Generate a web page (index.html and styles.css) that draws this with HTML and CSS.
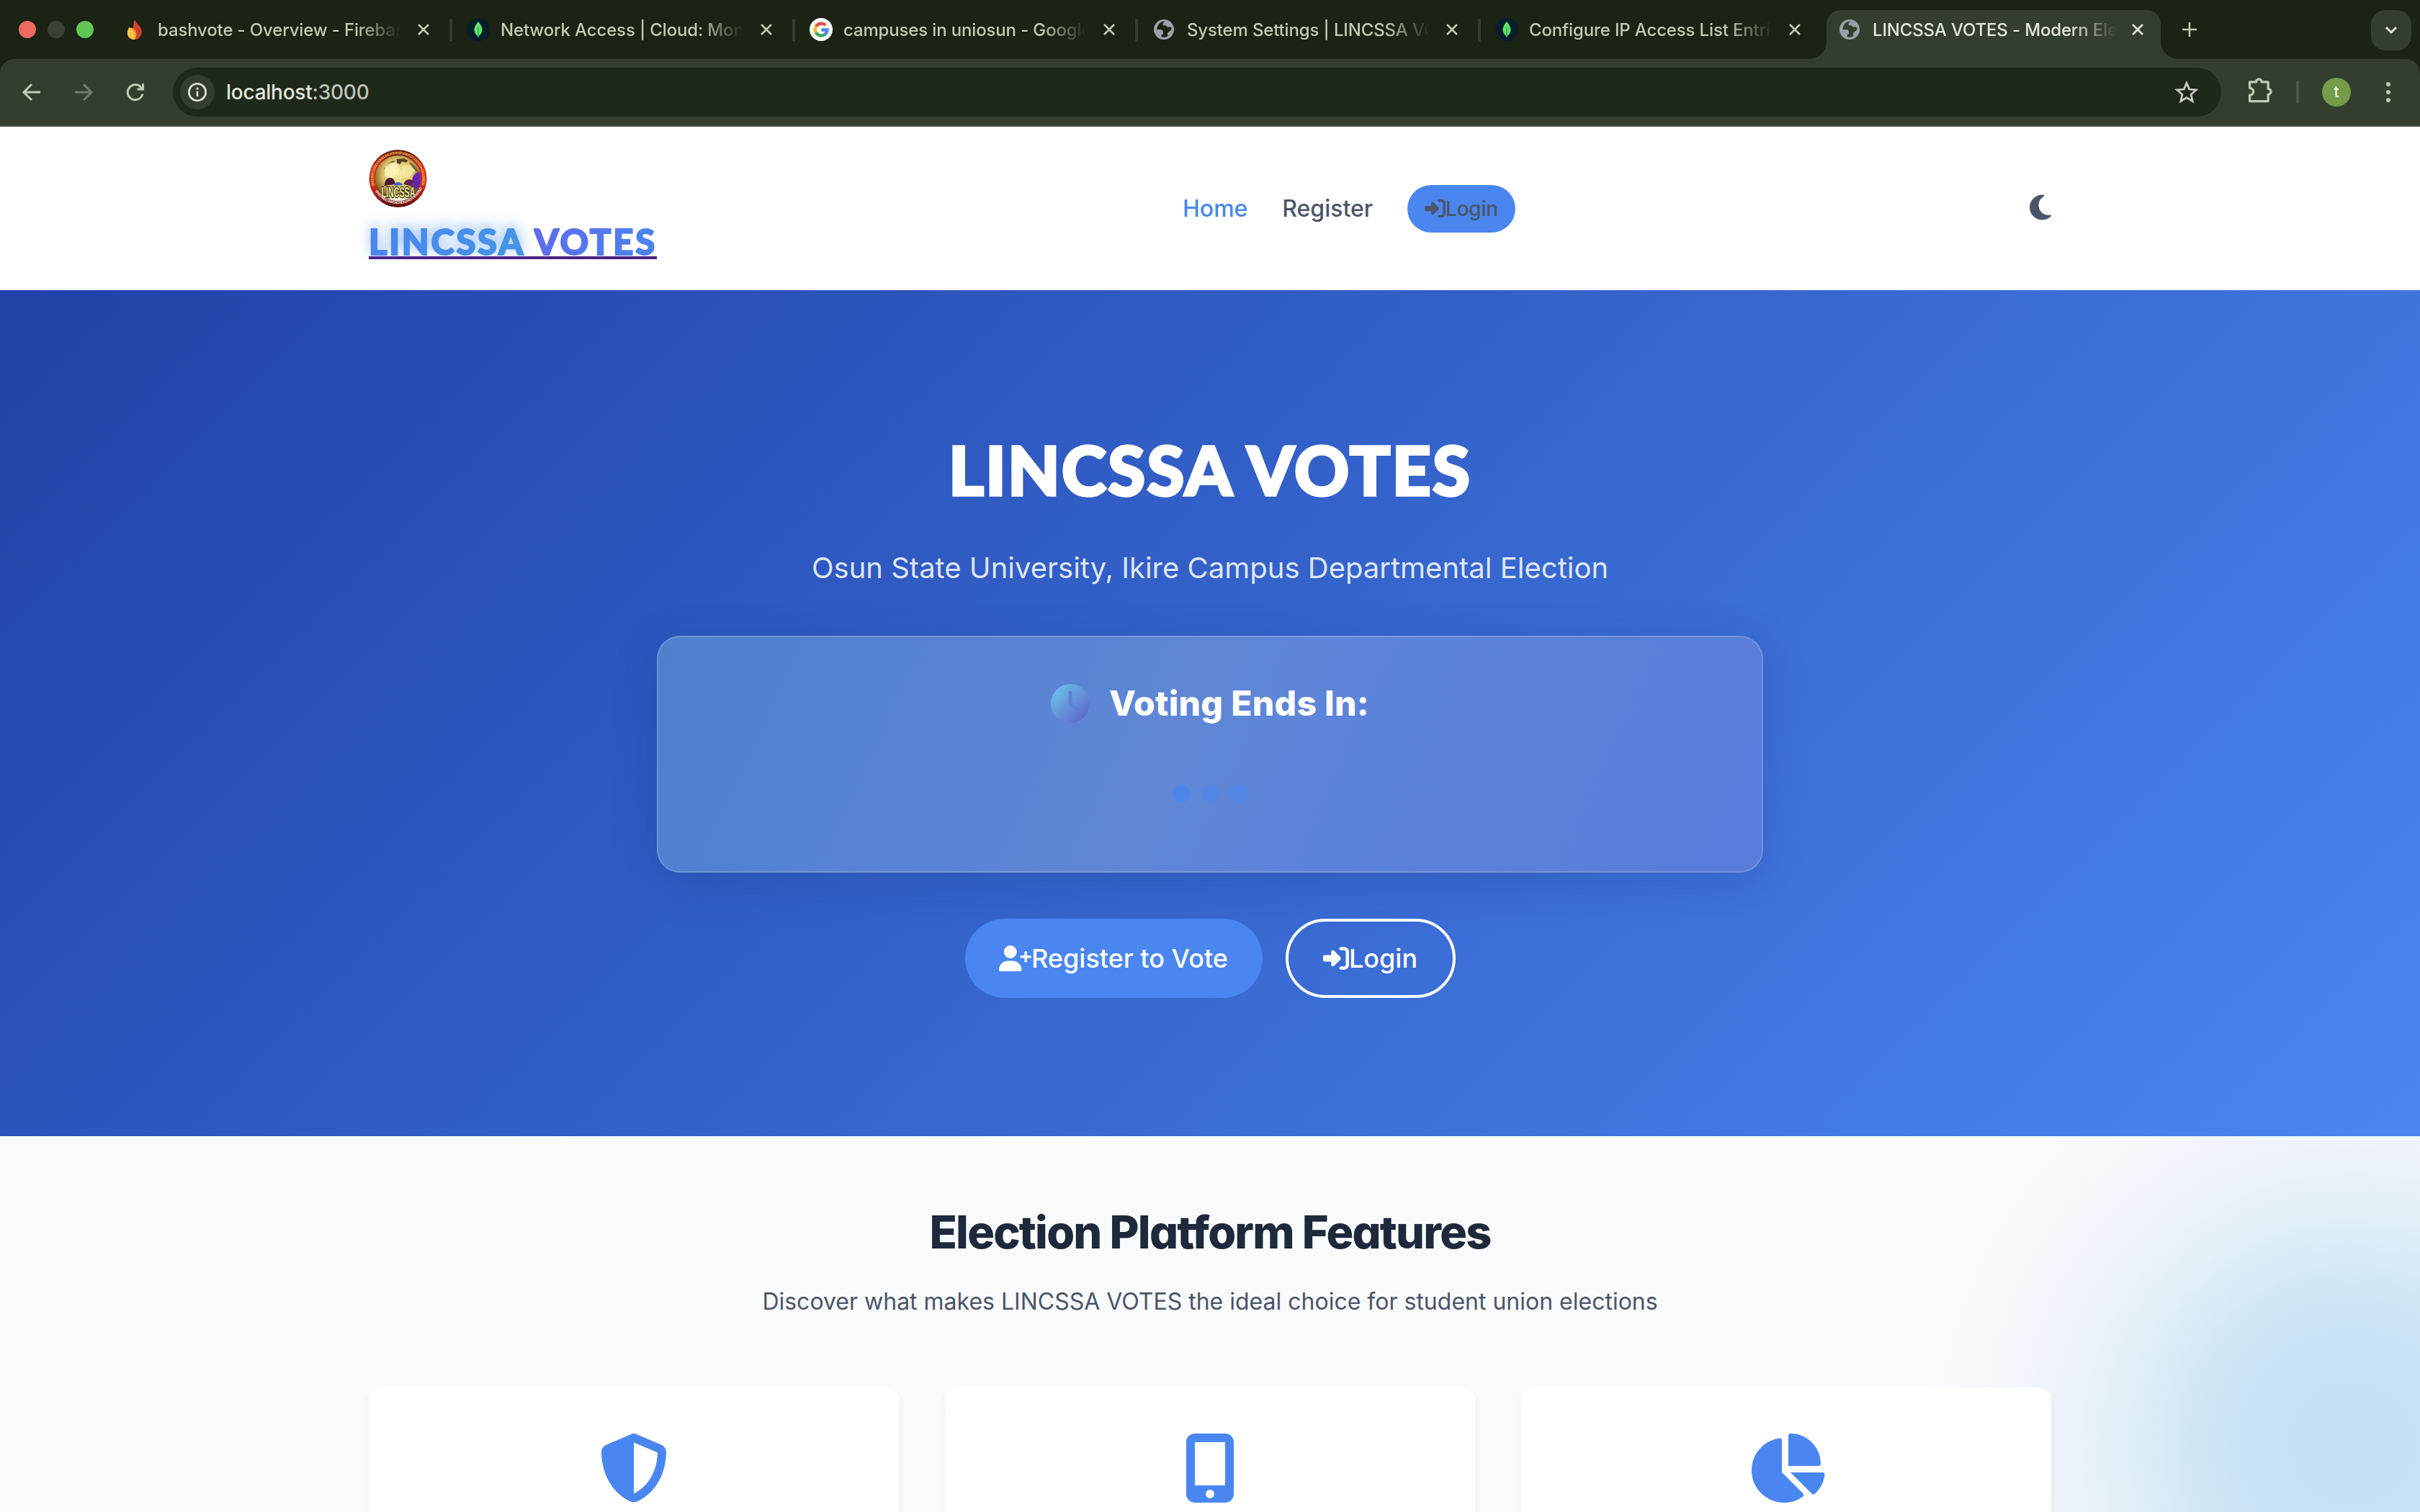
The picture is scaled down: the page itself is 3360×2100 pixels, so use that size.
FILE: index.html
```html
<!DOCTYPE html>
<html lang="en">
<head>
<meta charset="utf-8">
<title>LINCSSA VOTES - Modern Election Platform</title>
<link rel="stylesheet" href="styles.css">
</head>
<body>
<svg class="defs" width="0" height="0" aria-hidden="true">
  <defs>
    <symbol id="globe" viewBox="0 0 28 28"><circle cx="14" cy="14" r="14" fill="#9aa0a9"/><path d="M15 2.500c-4 .3-7 2-9 5.500-1.500 2.800-2 5-1.500 6l5.500.2c2 .2 3 1.500 3 3.500v3l-2.500.3v3c3 1.200 6.500.8 9.500-1.300-1.500-.8-1.700-3.200-.2-4.700 2-1.500 4-2 4.700-5 .4-1.500-.7-2.700-2.500-2.500l-3 .3c-1-2-2.500-2.500-4.500-2.500-2 0-2.500-1.200-2-2.500.5-1.200 2-1.500 2.500-3.300z" fill="var(--cut)"/></symbol>
    <symbol id="leaf" viewBox="0 0 32 32"><circle cx="16" cy="16" r="16" fill="#071e2b"/><path d="M16 5c3.500 4 5.500 7.500 5.500 11.500 0 4-2.300 6.700-4.800 8.700L16.500 27h-1l-.2-1.800c-2.500-2-4.800-4.700-4.800-8.700C10.500 12.500 12.500 9 16 5z" fill="#5fe36b"/><path d="M16 13v12" stroke="#1b8f4a"/></symbol>
    <symbol id="close" viewBox="0 0 18 18"><path d="M2 2l14 14M16 2L2 16" fill="none" stroke="currentColor" stroke-width="2.600"/></symbol>
    <symbol id="signin" viewBox="0 0 512 512"><path fill="currentColor" d="M217.900 105.900L340.700 228.700c7.200 7.200 11.300 17.100 11.300 27.300s-4.100 20.100-11.300 27.300L217.900 406.100c-6.400 6.400-15 9.900-24 9.900c-18.700 0-33.900-15.200-33.900-33.900l0-62.100L32 320c-17.700 0-32-14.300-32-32l0-64c0-17.700 14.300-32 32-32l128 0 0-62.100c0-18.700 15.200-33.900 33.900-33.900c9 0 17.600 3.600 24 9.900zM352 416l64 0c17.700 0 32-14.300 32-32l0-256c0-17.700-14.300-32-32-32l-64 0c-17.700 0-32-14.300-32-32s14.300-32 32-32l64 0c53 0 96 43 96 96l0 256c0 53-43 96-96 96l-64 0c-17.700 0-32-14.300-32-32s14.300-32 32-32z"/></symbol>
  </defs>
</svg>

<div class="tabstrip">
  <div class="lights"><i class="red"></i><i class="gray"></i><i class="green"></i></div>
  <div class="tab">
    <svg class="fav" viewBox="0 0 32 32"><path d="M15 2c1 4 7 8 9 13 2.500 7-2 15-9 15-5 0-8-3-8-8 2-4 6-5 6-10 0-4 1-7 2-10z" fill="#d0432a"/><path d="M7 13c4 1 7 4 8.500 8 1 4 0 7-.5 9-6 .3-11-4-10-10 .3-3 1-5 2-7z" fill="#f7c546"/><path d="M9 14c4 2 8 6 7 15 1-2 3-8-1-13-2-2-4-3-6-2z" fill="#ee8c34"/></svg>
    <span class="label">bashvote - Overview - Firebase console</span><svg class="x"><use href="#close"/></svg>
  </div>
  <div class="tab"><svg class="fav"><use href="#leaf"/></svg><span class="label">Network Access | Cloud: MongoDB Cloud</span><svg class="x"><use href="#close"/></svg></div>
  <div class="tab">
    <svg class="fav" viewBox="0 0 32 32"><circle cx="16" cy="16" r="16" fill="#fff"/><g fill="none" stroke-width="4.400"><path d="M9 11.800A8.600 8.600 0 0 1 22.300 10" stroke="#ea4f43"/><path d="M9 11.500a8.600 8.600 0 0 0 .2 9.300" stroke="#f5bb2c"/><path d="M9 20.300a8.600 8.600 0 0 0 12.800 2.200" stroke="#3fa757"/><path d="M16.300 16.500h8.200a8.600 8.600 0 0 1-3 6.200" stroke="#4a86f0"/></g></svg>
    <span class="label">campuses in uniosun - Google Search</span><svg class="x"><use href="#close"/></svg>
  </div>
  <div class="tab"><svg class="fav small"><use href="#globe"/></svg><span class="label">System Settings | LINCSSA VOTES</span><svg class="x"><use href="#close"/></svg></div>
  <div class="tab last"><svg class="fav"><use href="#leaf"/></svg><span class="label">Configure IP Access List Entries</span><svg class="x"><use href="#close"/></svg></div>
  <div class="tab active"><svg class="fav small"><use href="#globe"/></svg><span class="label">LINCSSA VOTES - Modern Election</span><svg class="x"><use href="#close"/></svg></div>
  <svg class="plus" viewBox="0 0 20 20"><path d="M10 0v20M0 10h20" stroke="currentColor" stroke-width="2.600"/></svg>
  <div class="tabmenu"><svg width="18" height="12" viewBox="0 0 18 12"><path d="M2 2l7 7 7-7" fill="none" stroke="currentColor" stroke-width="3"/></svg></div>
</div>

<div class="toolbar-bg">
<div class="toolbar">
  <svg class="nav-ico" viewBox="0 0 32 32"><path d="M28 16H6M16 5L5 16l11 11" /></svg>
  <svg class="nav-ico dim" viewBox="0 0 32 32"><path d="M4 16h22M16 5l11 11-11 11"/></svg>
  <svg class="nav-ico" viewBox="0 0 32 32"><path d="M26 18.500A10.500 10.500 0 1 1 23 8.500l3 3M26.500 4v8h-8"/></svg>
  <div class="omnibox">
    <span class="site"><svg width="28" height="28" viewBox="0 0 28 28"><circle cx="14" cy="14" r="11.700" fill="none" stroke="currentColor" stroke-width="2.600"/><path d="M14 12.500v7.500M14 7.500v3" stroke="currentColor" stroke-width="2.600"/></svg></span>
    <span class="url">localhost<b>:3000</b></span>
    <svg class="star" viewBox="0 0 32 32"><path d="M16 4l3.500 8.300 9 .8-6.800 5.900 2 8.800L16 23.100l-7.700 4.700 2-8.800-6.800-5.900 9-.8z" fill="none" stroke="currentColor" stroke-width="2.600"/></svg>
  </div>
  <svg class="puzzle" viewBox="0 0 36 36"><path d="M5 8h8a3.500 3.500 0 0 1 7 0h8v8.500a3.500 3.500 0 0 1 0 7V32H5v-7.500a4.500 4.500 0 0 0 0-9z" fill="none" stroke="currentColor" stroke-width="3" stroke-linejoin="round"/></svg>
  <i class="tsep"></i>
  <span class="avatar">t</span>
  <span class="dots"><i></i><i></i><i></i></span>
</div>
</div>

<header class="site-header">
  <a class="brand">
    <svg class="crest" viewBox="0 0 80 80">
      <defs>
        <radialGradient id="gold" cx=".5" cy=".4" r=".6"><stop offset="0" stop-color="#fbf0a8"/><stop offset=".55" stop-color="#dcc06a"/><stop offset=".85" stop-color="#8a6a2c"/><stop offset="1" stop-color="#3d2a14"/></radialGradient>
        <linearGradient id="ring" x1="0" y1="0" x2="0" y2="1"><stop offset="0" stop-color="#5c1512"/><stop offset=".3" stop-color="#c92a1c"/><stop offset=".6" stop-color="#d62a20"/><stop offset="1" stop-color="#5a0f10"/></linearGradient>
        <path id="arcTop" d="M7.500 50A34 34 0 1 1 72.500 50"/><path id="arcLow" d="M6 52A36.500 36.500 0 0 0 74 52"/>
        <clipPath id="disc"><circle cx="40" cy="40" r="31.500"/></clipPath>
      </defs>
      <circle cx="40" cy="40" r="40" fill="url(#ring)"/>
      <circle cx="40" cy="40" r="32" fill="url(#gold)"/>
      <g clip-path="url(#disc)">
        <path d="M20 28c4-8 9-12 16-13l-2 4c-5 1-9 4-14 9z" fill="#3b301a" opacity=".7"/>
        <path d="M38 13l10-1 6 3-3 3-5-2-3 4-4-1z" fill="#2c2413" opacity=".8"/>
        <path d="M56 17c6 3 10 8 13 15l-5-3c-3-3-7-6-8-12z" fill="#3b301a" opacity=".55"/>
        <path d="M22 24c6-7 11-8 17-5l3 9-9 12-11-3z" fill="#fdf6b8" opacity=".85"/>
        <path d="M46 22l12-1 6 8-9 10-9-2z" fill="#f9ecaa" opacity=".7"/>
        <path d="M21 50c1-8 4-11 8-11s7 3 7 9z" fill="#4b1a36"/><path d="M35 50c-1-6 8-7 12-1z" fill="#3b61c8"/><path d="M48 48c1-6 8-9 13-5v8z" fill="#5f2550"/><path d="M60 44c-1-8 5-14 12-13v20l-9 4z" fill="#6a22ac"/><path d="M18 64h44l-6 10H26z" fill="#f1ead0"/>
      </g>
      <text x="17" y="66" class="crest-name" textLength="47" lengthAdjust="spacingAndGlyphs">LINCSSA</text>
      <text class="crest-rim gold"><textPath href="#arcTop" textLength="126">LINGUISTICS AND COMMUNICATION STUDIES STUDENTS' ASSOCIATION</textPath></text>
      <text class="crest-rim"><textPath href="#arcLow" startOffset="6" textLength="80">EFFECTIVE COMMUNICATION LINKS THE WORLD</textPath></text>
    </svg>
    <span class="wordmark"><span class="w1">LINCSSA</span><span class="w2">VOTES</span></span>
  </a>
  <nav class="links">
    <a class="on">Home</a><a>Register</a>
    <a class="pill"><svg width="29" height="29"><use href="#signin"/></svg>Login</a>
  </nav>
  <svg class="moon" viewBox="0 0 384 512"><path fill="currentColor" d="M223.500 32C100 32 0 132.300 0 256S100 480 223.500 480c60.600 0 115.500-24.200 155.800-63.400c5-4.900 6.300-12.500 3.100-18.700s-10.100-9.700-17-8.500c-9.800 1.700-19.800 2.600-30.100 2.600c-96.900 0-175.500-78.800-175.500-176c0-65.800 36-123.100 89.300-153.300c6.100-3.500 9.200-10.500 7.700-17.300s-7.300-11.900-14.300-12.500c-6.300-.5-12.600-.8-19-.8z"/></svg>
</header>

<section class="hero">
  <h1>LINCSSA VOTES</h1>
  <p>Osun State University, Ikire Campus Departmental Election</p>
  <div class="countdown">
    <h2><svg width="54" height="54" viewBox="0 0 54 54"><defs><linearGradient id="clk" x1="0" y1="0" x2="1" y2="1"><stop offset=".1" stop-color="#6cc0e8"/><stop offset=".9" stop-color="#5c68cc"/></linearGradient></defs><circle cx="27" cy="27" r="27" fill="url(#clk)"/><path d="M27 12v16l11 7" fill="none" stroke="#5a80d4" stroke-width="5" stroke-linecap="round" stroke-linejoin="round"/></svg>Voting Ends In:</h2>
    <div class="loading"><i></i><i></i><i></i></div>
  </div>
  <div class="actions">
    <a class="btn solid"><svg width="45" height="36" viewBox="0 0 640 512"><path fill="currentColor" d="M96 128a128 128 0 1 1 256 0A128 128 0 1 1 96 128zM0 482.300C0 383.800 79.800 304 178.300 304h91.400C368.200 304 448 383.800 448 482.300c0 16.400-13.300 29.700-29.700 29.700H29.700C13.300 512 0 498.700 0 482.300zM504 312V248H440c-13.300 0-24-10.700-24-24s10.700-24 24-24h64V136c0-13.300 10.700-24 24-24s24 10.700 24 24v64h64c13.300 0 24 10.700 24 24s-10.700 24-24 24H552v64c0 13.300-10.700 24-24 24s-24-10.700-24-24z"/></svg>Register to Vote</a>
    <a class="btn line"><svg width="36" height="36"><use href="#signin"/></svg>Login</a>
  </div>
</section>

<section class="features">
  <h2>Election Platform Features</h2>
  <p>Discover what makes LINCSSA VOTES the ideal choice for student union elections</p>
  <div class="cards">
    <article><svg width="96" height="96" viewBox="0 0 512 512"><path fill="currentColor" d="M256 0c4.600 0 9.200 1 13.400 2.900L457.700 82.800c22 9.300 38.400 31 38.300 57.200c-.5 99.200-41.300 280.700-213.600 363.200c-16.700 8-36.100 8-52.800 0C57.300 420.700 16.500 239.200 16 140c-.1-26.200 16.300-47.900 38.300-57.200L242.700 2.900C246.800 1 251.400 0 256 0zm0 66.800V444.800C394 378 431.100 230.100 432 141.400L256 66.800l0 0z"/></svg></article>
    <article><svg width="72" height="96" viewBox="0 0 384 512"><path fill="currentColor" d="M16 64C16 28.700 44.700 0 80 0H304c35.300 0 64 28.700 64 64V448c0 35.300-28.700 64-64 64H80c-35.300 0-64-28.700-64-64V64zM224 448a32 32 0 1 0 -64 0 32 32 0 1 0 64 0zM304 64H80V384H304V64z"/></svg></article>
    <article><svg width="108" height="96" viewBox="0 0 576 512"><path fill="currentColor" d="M304 240V16.600c0-9 7-16.600 16-16.600C443.700 0 544 100.300 544 224c0 9-7.600 16-16.600 16H304zM32 272C32 150.700 122.100 50.300 239 34.300c9.200-1.300 17 6.100 17 15.400V288L412.500 444.500c6.700 6.700 6.200 17.700-1.500 23.100C371.800 495.600 323.800 512 272 512C139.500 512 32 404.600 32 272zm526.400 16c9.300 0 16.600 7.800 15.400 17c-7.700 55.900-34.600 105.600-73.900 142.300c-6 5.600-15.400 5.200-21.200-.7L320 288H558.400z"/></svg></article>
  </div>
</section>
</body>
</html>
```
FILE: styles.css
```css
* { box-sizing: border-box; margin: 0; padding: 0; }
body { width: 3360px; height: 2100px; overflow: hidden; display: flex; flex-direction: column; background: #f9fafc; font-family: Inter, "Liberation Sans", sans-serif; }
svg { display: block; flex: none; overflow: visible; }
.defs { position: absolute; }

/* browser tab strip */
.tabstrip { flex: none; height: 82px; background: #1a2314; display: flex; align-items: center; --cut: #1a2314; color: #bfcbb3; }
.lights { width: 150px; padding-left: 26px; display: flex; gap: 16px; }
.lights i { width: 24px; height: 24px; border-radius: 50%; }
.red { background: #ed6a5e; }
.gray { background: #3a4236; }
.green { background: #61c554; }
.tab { position: relative; width: 476px; height: 68px; margin-top: 14px; padding: 0 29px 14px 26px; display: flex; align-items: center; }
.tab:not(.last):not(.active)::after { content: ""; position: absolute; right: -2px; top: 12px; width: 4px; height: 32px; border-radius: 2px; background: #343e2f; }
.tab .fav { width: 32px; height: 32px; margin: 0 15px 0 -4px; }
.tab .fav.small { width: 28px; height: 28px; margin: 0 18px 0 -2px; }
.label { width: 338px; padding-top: 2px; font-size: 24px; font-weight: 450; letter-spacing: -.15px; line-height: 32px; white-space: nowrap; overflow: hidden; -webkit-mask-image: linear-gradient(90deg, #000 276px, transparent 338px); mask-image: linear-gradient(90deg, #000 276px, transparent 338px); }
.x { width: 18px; height: 18px; margin-left: auto; }
.active { --cut: #343e2f; color: #e1e7da; }
.active::before { content: ""; position: absolute; z-index: 0; left: 6px; right: 6px; top: 0; bottom: 0; border-radius: 20px 20px 0 0; background: #343e2f; }
.active::after { content: ""; position: absolute; left: -18px; right: -18px; bottom: 0; height: 24px; background: radial-gradient(circle at 0 0, transparent 23.500px, #343e2f 24px) left / 24px 24px no-repeat, radial-gradient(circle at 100% 0, transparent 23.500px, #343e2f 24px) right / 24px 24px no-repeat; }
.active > * { position: relative; z-index: 1; }
.plus { width: 20px; height: 20px; margin-left: 24px; }
.tabmenu { margin-left: auto; margin-right: 12px; width: 56px; height: 56px; border-radius: 20px; background: #343e2f; display: flex; align-items: center; justify-content: center; color: #e1e7da; margin-top: 2px; }

/* browser toolbar */
.toolbar-bg { flex: none; background: #1a2314; }
.toolbar { height: 94px; background: #343e2f; border-bottom: 2px solid #484e45; border-radius: 20px 20px 0 0; display: flex; align-items: center; padding: 0 38px 0 28px; color: #bfcbb3; }
.nav-ico { width: 32px; height: 32px; margin-right: 40px; fill: none; stroke: currentColor; stroke-width: 3; }
.nav-ico + .nav-ico + .nav-ico { margin-right: 36px; }
.dim { color: #737d6c; }
.omnibox { width: 2844px; height: 68px; border-radius: 34px; background: #1f291a; display: flex; align-items: center; padding: 0 31px 0 10px; }
.site { width: 48px; height: 48px; border-radius: 50%; background: #343e2f; display: flex; align-items: center; justify-content: center; color: #e1e7da; }
.url { margin-left: 16px; font-size: 28px; line-height: 36px; font-weight: 450; letter-spacing: -.25px; color: #e1e7da; }
.url b { font-weight: 450; color: #c0c3bd; }
.star { margin-left: auto; width: 34px; height: 34px; color: #c7cac5; }
.puzzle { width: 40px; height: 40px; margin-left: 34px; margin-top: -6px; }
.tsep { width: 4px; height: 32px; border-radius: 2px; background: #4b5744; margin-left: 30px; }
.avatar { width: 40px; height: 40px; border-radius: 50%; background: #749c49; color: #fff; font-size: 22px; line-height: 38px; text-align: center; margin-left: 32px; }
.dots { margin-left: auto; margin-right: 3px; display: grid; gap: 5px; }
.dots i { width: 6px; height: 6px; border-radius: 50%; background: #bfcbb3; }

/* site header */
.site-header { flex: none; height: 227px; background: #fff; padding: 0 512px; display: grid; grid-template-columns: 1130px 462px 1fr; align-items: center; }
.brand { height: 227px; padding-top: 32px; width: 400px; }
.crest { width: 81px; height: 80px; }
.crest-name { font: 700 21px "Liberation Sans", sans-serif; fill: #f8eb9a; stroke: #221a10; stroke-width: 2.400px; paint-order: stroke; }
.crest-rim { font: 700 5px "Liberation Sans", sans-serif; fill: #f3dcd8; }
.crest-rim.gold { fill: #f0b94c; }
.wordmark { display: flex; justify-content: space-between; margin-top: 17px; height: 55px; border-bottom: 4px solid #4b1f83; font: 900 49px/60px Lato, sans-serif; white-space: nowrap; }
.wordmark span { background-clip: text; -webkit-background-clip: text; color: transparent; height: 60px; -webkit-text-stroke: 2px transparent; }
.w1 { letter-spacing: 2.700px; background-image: linear-gradient(100deg, #4a86f0, #4495e6); filter: drop-shadow(0 -5px 9px rgba(74, 140, 240, .6)); }
.w2 { letter-spacing: 2.800px; background-image: linear-gradient(100deg, #5f6bee, #4a84f0); }
.links { display: flex; align-items: center; justify-content: space-between; font-size: 32px; font-weight: 500; color: #4a5568; white-space: nowrap; }
.on { color: #4a86f0; }
.pill { width: 150px; height: 66px; border-radius: 33px; background: #4a86f0; display: flex; align-items: center; justify-content: center; font-size: 28px; letter-spacing: -.2px; }
.moon { justify-self: end; width: 30px; height: 40px; margin-bottom: 4px; color: #4a5568; }

/* hero */
.hero { flex: none; height: 1175px; padding-top: 189px; background: linear-gradient(135deg, #2042a8, #4a86f0); color: #fff; display: flex; flex-direction: column; align-items: center; }
.hero h1 { font: 900 94px/120px Lato, sans-serif; letter-spacing: 2.300px; -webkit-text-stroke: 3.500px #fff; white-space: nowrap; }
.hero p { margin-top: 45px; font-size: 40px; line-height: 64px; color: rgba(255, 255, 255, .85); white-space: nowrap; }
.countdown { width: 1536px; height: 329px; margin-top: 62px; padding-top: 62px; border: 2px solid rgba(255, 255, 255, .15); border-radius: 32px; background: linear-gradient(115deg, #4f7fce, #5f87d6 48%, #5c83da 62%, #587dda) border-box; box-shadow: 0 16px 64px rgba(20, 40, 110, .2); }
.countdown h2 { display: flex; align-items: center; justify-content: center; gap: 27px; font: 800 48px/60px Inter, sans-serif; font-feature-settings: "cv11"; letter-spacing: .3px; }
.loading { display: flex; justify-content: center; gap: 16px; margin-top: 83px; }
.loading i { width: 24px; height: 24px; border-radius: 50%; background: #4a86f0; opacity: .55; }
.loading i:first-child { opacity: .9; }
.actions { display: flex; gap: 32px; margin-top: 64px; }
.btn { height: 110px; border-radius: 55px; display: flex; align-items: center; justify-content: center; font-size: 36px; font-weight: 500; white-space: nowrap; }
.solid { width: 413px; background: #4a86f0; }
.line { width: 236px; border: 4px solid #fff; }

/* features */
.features { position: relative; height: 522px; overflow: hidden; padding: 93px 512px 0; background: radial-gradient(circle at 3266px 426px, #c4e1f4 0, #c8e1f5 140px, #cfe6f5 215px, #e2f0f8 325px, #edf2fa 405px, #f5f7fb 500px, #f9fafc 600px); text-align: center; }
.features h2 { font: 800 63px/80px Inter, sans-serif; font-feature-settings: "cv11"; letter-spacing: -1.800px; color: #1e293b; white-space: nowrap; }
.features p { margin-top: 32px; font-size: 32px; line-height: 50px; color: #4a5568; white-space: nowrap; }
.cards { display: grid; grid-template-columns: repeat(3, 1fr); gap: 64px; margin-top: 94px; }
.cards article { height: 400px; padding-top: 64px; border-radius: 16px; background: #fff; box-shadow: 0 8px 12px rgba(0, 0, 0, .06); display: flex; justify-content: center; color: #4a86f0; }
```
